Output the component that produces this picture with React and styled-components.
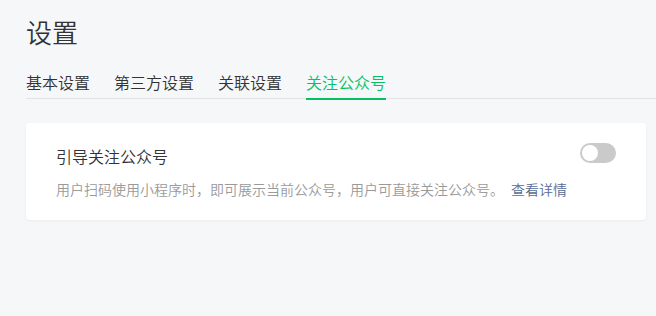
import React, { useState } from "react";
import styled, { createGlobalStyle } from "styled-components";

const Global = createGlobalStyle`
  html, body { margin: 0; padding: 0; background: #f6f7f9; }
  body { font-family: "Noto Sans CJK SC", "Noto Sans", sans-serif; font-weight: 350; }
  * { box-sizing: border-box; }
`;

const Page = styled.div`
  padding: 14px 0 40px 26px;
  min-height: 316px;
`;

const Title = styled.h1`
  margin: 0;
  font-size: 26px;
  line-height: 36px;
  font-weight: 350;
  color: #333;
`;

const TabBar = styled.div`
  display: flex;
  gap: 24px;
  margin-top: 20px;
  border-bottom: 1px solid #e2e3e5;
`;

const Tab = styled.div`
  position: relative;
  font-size: 16px;
  line-height: 24px;
  padding-bottom: 4px;
  color: ${(p) => (p.$active ? "#07c160" : "#333")};
  cursor: pointer;
  &::after {
    content: "";
    display: ${(p) => (p.$active ? "block" : "none")};
    position: absolute;
    left: 0;
    right: 0;
    bottom: -2px;
    height: 2px;
    background: #07c160;
  }
`;

const Card = styled.div`
  margin: 24px 10px 0 0;
  background: #fff;
  border-radius: 4px;
  padding: 20px 30px 21px 30px;
  box-shadow: 0 1px 3px rgba(0, 0, 0, 0.05);
`;

const CardHead = styled.div`
  display: flex;
  justify-content: space-between;
  align-items: flex-start;
`;

const CardTitle = styled.div`
  font-size: 16px;
  line-height: 26px;
  color: #333;
`;

const Switch = styled.button`
  position: relative;
  width: 36px;
  height: 20px;
  border: none;
  padding: 0;
  border-radius: 10px;
  background: ${(p) => (p.$on ? "#07c160" : "#cacaca")};
  cursor: pointer;
  &::after {
    content: "";
    position: absolute;
    top: 2px;
    left: ${(p) => (p.$on ? "18px" : "2px")};
    width: 16px;
    height: 16px;
    border-radius: 50%;
    background: #fff;
  }
`;

const Desc = styled.div`
  margin-top: 10px;
  font-size: 14px;
  line-height: 20px;
  color: #9a9a9a;
`;

const Link = styled.a`
  margin-left: 7px;
  color: #576b95;
  text-decoration: none;
`;

export default function App() {
  const [on, setOn] = useState(false);
  const tabs = ["基本设置", "第三方设置", "关联设置", "关注公众号"];
  return (
    <Page>
      <Global />
      <Title>设置</Title>
      <TabBar>
        {tabs.map((t, i) => (
          <Tab key={t} $active={i === 3}>
            {t}
          </Tab>
        ))}
      </TabBar>
      <Card>
        <CardHead>
          <CardTitle>引导关注公众号</CardTitle>
          <Switch $on={on} onClick={() => setOn(!on)} />
        </CardHead>
        <Desc>
          用户扫码使用小程序时，即可展示当前公众号，用户可直接关注公众号。
          <Link href="#">查看详情</Link>
        </Desc>
      </Card>
    </Page>
  );
}
